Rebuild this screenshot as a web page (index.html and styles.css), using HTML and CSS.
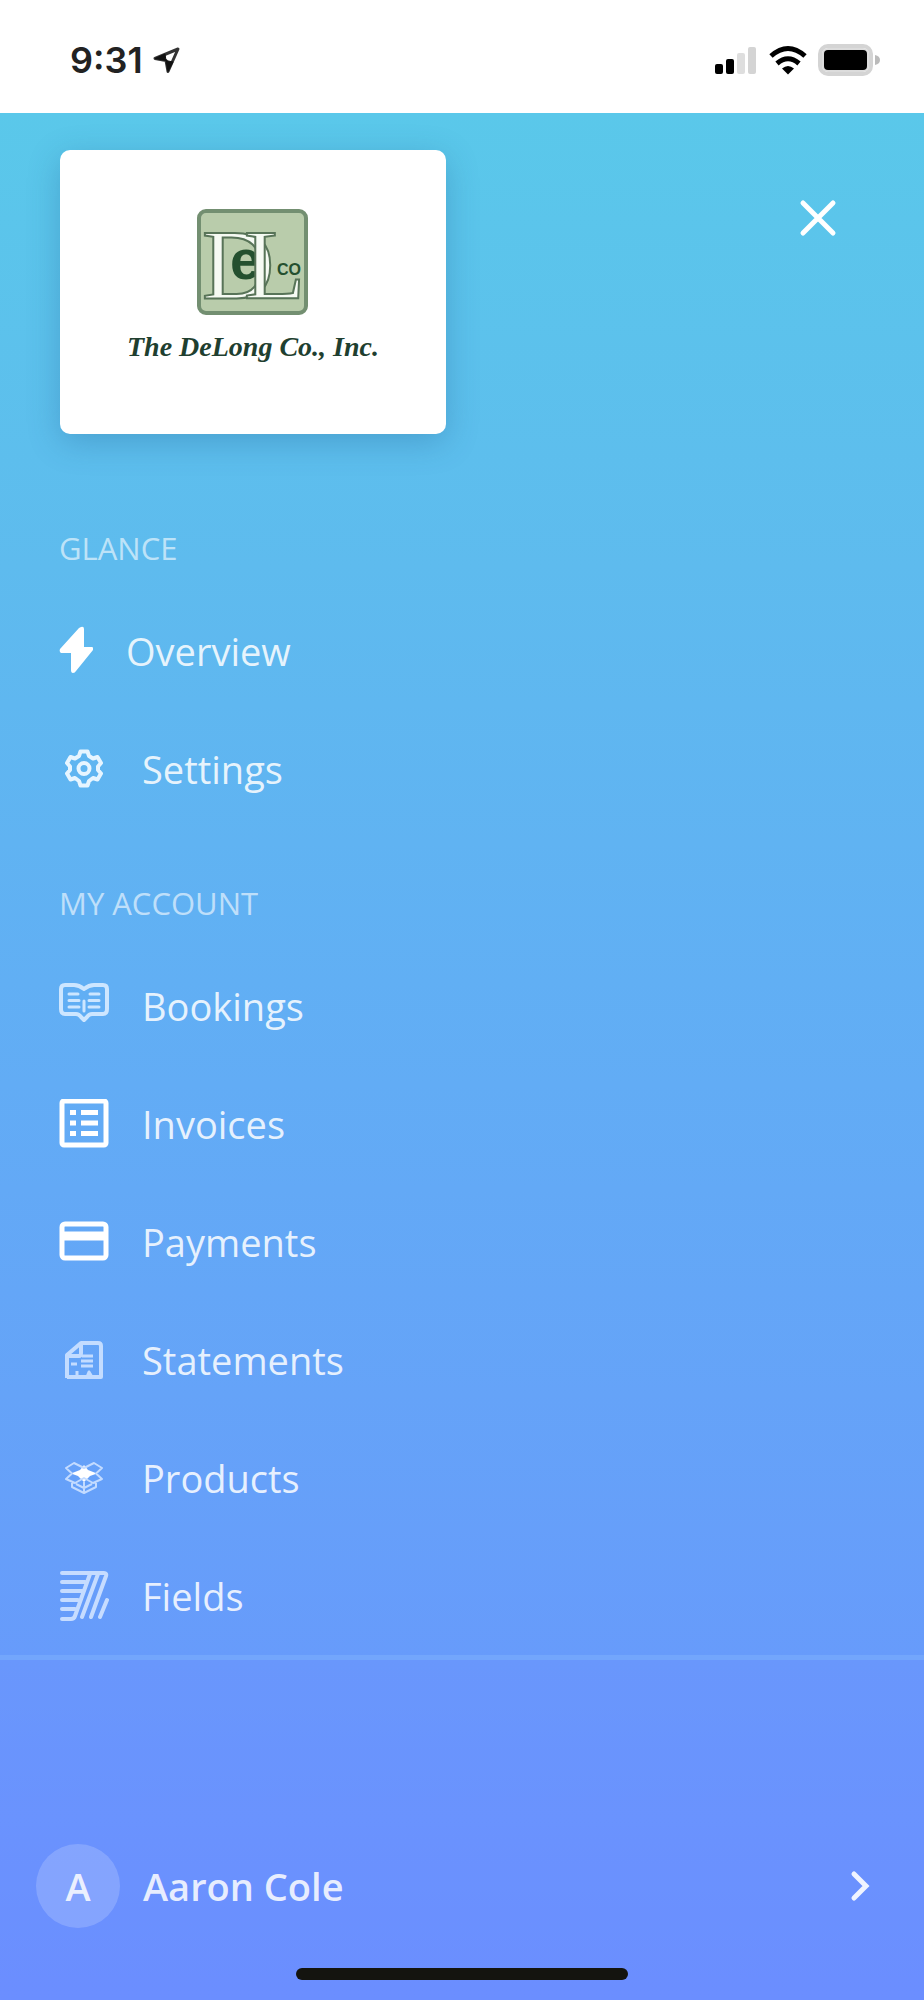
FILE: index.html
```html
<!DOCTYPE html>
<html lang="en">
<head>
<meta charset="utf-8">
<meta name="viewport" content="width=device-width, initial-scale=1">
<title>Menu</title>
<link rel="stylesheet" href="styles.css">
</head>
<body>
<header class="status">
  <div class="status-left">
    <span class="time">9:31</span>
    <svg class="location" viewBox="0 0 28 28" aria-hidden="true"><path d="M25 3 2 12.500 13 14.500 15 25.500Z" fill="none" stroke="#333" stroke-width="3" stroke-linejoin="round"/><path d="M2 12.500 13 14.500 12 8ZM15 25.500 13 14.500 20 16Z" fill="#111" stroke="#111" stroke-width="1"/></svg>
  </div>
  <div class="status-right">
    <svg class="signal" viewBox="0 0 44 30" aria-hidden="true"><rect x="1" y="19" width="8" height="10" rx="2"/><rect x="12" y="14" width="8" height="15" rx="2"/><rect x="23" y="8" width="8" height="21" rx="2" fill="#dedede"/><rect x="34" y="2" width="8" height="27" rx="2" fill="#d4d4d4"/></svg>
    <svg class="wifi" viewBox="0 0 40 30" aria-hidden="true"><path d="M3 11Q20-4 37 11M9 18.500Q20 9 31 18.500" fill="none" stroke="#000" stroke-width="5"/><path d="M14 23.500Q20 18.500 26 23.500L20 29.500Z"/></svg>
    <svg class="battery" viewBox="0 0 62 32" aria-hidden="true"><rect x="2" y="2" width="51" height="28" rx="8" fill="#fff" stroke="#d4d4d4" stroke-width="4"/><rect x="4" y="4" width="47" height="24" rx="6" fill="#dcdcdc"/><rect x="6" y="6" width="43" height="20" rx="4"/><path d="M57 11q5 1 5 5t-5 5z" fill="#bbb"/></svg>
  </div>
</header>

<div class="menu">
  <div class="menu-head">
    <div class="logo-card">
      <svg class="logo" viewBox="0 0 260 170" role="img" aria-label="The DeLong Co., Inc.">
        <rect x="76" y="6" width="107" height="102" rx="7" fill="#b9ccab" stroke="#738f71" stroke-width="4"/>
        <text x="107" y="74" class="logo-e">e</text>
        <text x="79" y="93" class="logo-big">D</text>
        <text x="121" y="93" class="logo-big">L</text>
        <text x="154" y="70" class="logo-co">CO</text>
        <text x="130" y="151" class="logo-name" text-anchor="middle">The DeLong Co., Inc.</text>
      </svg>
    </div>
    <button class="close" type="button" aria-label="Close menu">
      <svg viewBox="0 0 40 40" aria-hidden="true"><path d="M5 5 35 35M35 5 5 35" stroke="#fff" stroke-width="5" stroke-linecap="round"/></svg>
    </button>
  </div>

  <nav class="nav">
    <h2 class="section">GLANCE</h2>
    <a class="item" href="#overview">
      <svg class="icon icon-bolt" viewBox="0 0 34 50" aria-hidden="true"><path d="M22 1Q25 0 25 3V21H33Q35 22 34 24L17 45Q16 47 14 47 12 47 12 44V27H2Q0 26 1 23L20 2Z" fill="#fff"/></svg>
      <span>Overview</span>
    </a>
    <a class="item" href="#settings">
      <svg class="icon" viewBox="0 1 50 50" aria-hidden="true"><g fill="none" stroke="#e7f5ff" stroke-width="4" stroke-linejoin="round"><path d="M21.500 8.500H28.500L30 13 34 15.500 38.500 14 42 20 39 23.500V27L42 30.500 38.500 36.500 34 35 30 38 28.500 42.500H21.500L20 38 16 35 11.500 36.500 8 30.500 11 27V23.500L8 20 11.500 14 16 15.500 20 13Z"/><circle cx="25" cy="25.500" r="5.500"/></g></svg>
      <span>Settings</span>
    </a>

    <h2 class="section section-next">MY ACCOUNT</h2>
    <a class="item" href="#bookings">
      <svg class="icon" viewBox="0 1 50 50" aria-hidden="true"><g fill="none" stroke="#cde6ff" stroke-width="4" stroke-linecap="round" stroke-linejoin="round"><path d="M25 9Q20 5 15 5H6Q2 5 2 9V29Q2 34 6 34H17Q20 34 22 37L25 40 28 37Q30 34 33 34H44Q48 34 48 29V9Q48 5 44 5H35Q30 5 25 9Z"/><path stroke-width="3" d="M25 21V31M10 14H19M10 20.500H20M10 27H20M31 14H40M30 20.500H40M30 27H40"/></g></svg>
      <span>Bookings</span>
    </a>
    <a class="item" href="#invoices">
      <svg class="icon" viewBox="0 1 50 50" aria-hidden="true"><rect x="3" y="3" width="44" height="44" rx="2" fill="none" stroke="#fff" stroke-width="5"/><path d="M11 14.500H17M11 25H17M11 35.500H17M22 14.500H39M22 25H39M22 35.500H39" stroke="#fff" stroke-width="5"/></svg>
      <span>Invoices</span>
    </a>
    <a class="item" href="#payments">
      <svg class="icon" viewBox="0 1 50 50" aria-hidden="true"><rect x="3" y="8" width="44" height="34" rx="3" fill="none" stroke="#fff" stroke-width="5"/><path d="M4 20H46" stroke="#fff" stroke-width="9"/></svg>
      <span>Payments</span>
    </a>
    <a class="item" href="#statements">
      <svg class="icon" viewBox="0 0 50 50" aria-hidden="true"><g fill="none" stroke="#c3dcff" stroke-width="4" stroke-linejoin="round"><path d="M8 43V20L22 8H39Q42 8 42 11V42H8M8 21H20Q22 21 22 18V8"/><path stroke-width="3" d="M23 21H34M22 26H34M22 31H34M12 29H18M18 42V36M28 42 30 37 33 42"/></g></svg>
      <span>Statements</span>
    </a>
    <a class="item" href="#products">
      <svg class="icon" viewBox="0 0 50 50" aria-hidden="true"><path d="M25 12 29 17 38 20.500 31 23 25 29 19 23 12 20.500 21 17Z" fill="#fff"/><path d="M25 15 15 10 7 15 13 20.500 7 26 16 30 25 25 34 30 43 26 37 20.500 43 15 35 10ZM13 30V34L25 40 37 34V30M25 29V39M17 31 25 35 33 31" fill="none" stroke="#c3dbff" stroke-width="2" stroke-linejoin="round"/></svg>
      <span>Products</span>
    </a>
    <a class="item" href="#fields">
      <svg class="icon" viewBox="0 0 50 50" aria-hidden="true"><g fill="none" stroke="#c6dcff" stroke-width="4" stroke-linecap="round" stroke-linejoin="round"><path d="M3 2H45Q48 2 47 5L32 46M3 11H26M3 20H23M3 29H19M3 38H16M3 48H12Q15 48 16 45L31 3M23 46 39 3M41 46 48 29"/></g></svg>
      <span>Fields</span>
    </a>
  </nav>

  <footer class="foot">
    <a class="user" href="#account">
      <span class="avatar">A</span>
      <span class="user-name">Aaron Cole</span>
      <svg class="chevron" viewBox="0 0 20 32" aria-hidden="true"><path d="M4 4 16 16 4 28" fill="none" stroke="#f0f4ff" stroke-width="5" stroke-linecap="round"/></svg>
    </a>
    <div class="home-bar"></div>
  </footer>
</div>
</body>
</html>
```
FILE: styles.css
```css
* { box-sizing: border-box; }
body {
  margin: 0;
  min-height: 100vh;
  display: flex;
  flex-direction: column;
  font-family: "Open Sans", "Noto Sans", sans-serif;
  background: #fff;
}
svg { display: block; flex: none; }

.status {
  height: 113px;
  padding: 6px 44px 0 70px;
  display: flex;
  align-items: center;
  justify-content: space-between;
}
.status-left { display: flex; align-items: center; gap: 10px; }
.status-right { display: flex; align-items: center; gap: 10px; }
.time { font: 600 36px/44px Inter, sans-serif; color: #222; }
.location { width: 28px; height: 28px; }
.signal { width: 44px; height: 30px; }
.wifi { width: 40px; height: 30px; }
.battery { width: 62px; height: 32px; }

.menu {
  flex: 1;
  display: flex;
  flex-direction: column;
  background: linear-gradient(#5ac8ea, #5ebbee 24%, #61aff4 46%, #65a3f8 68%, #679bfb 82%, #698cff);
}
.menu-head {
  padding: 37px 86px 0 60px;
  display: flex;
  justify-content: space-between;
  align-items: flex-start;
}
.logo-card {
  width: 386px;
  height: 284px;
  padding-bottom: 4px;
  border-radius: 10px;
  background: #fff;
  box-shadow: 0 8px 32px rgba(30, 90, 140, 0.3);
  display: flex;
  align-items: center;
  justify-content: center;
}
.logo { width: 260px; height: 170px; }
.logo-big {
  font: 100px "Liberation Serif", serif;
  fill: #f6faf3;
  stroke: #587458;
  stroke-width: 2px;
}
.logo-e { font: bold 56px "Liberation Sans", sans-serif; fill: #24502f; }
.logo-co { font: bold 16px "Liberation Sans", sans-serif; fill: #24502f; }
.logo-name { font: italic bold 28px "Liberation Serif", serif; fill: #1f3f30; }
.close {
  margin: 48px 0 0;
  padding: 0;
  width: 40px;
  height: 40px;
  border: 0;
  background: none;
}

.nav { padding-top: 92px; }
.section {
  margin: 0 0 22px;
  padding-left: 59px;
  font-size: 31px;
  line-height: 44px;
  font-weight: 500;
  color: rgba(255, 255, 255, 0.6);
}
.section-next { margin-top: 53px; }
.item {
  height: 118px;
  padding-left: 59px;
  display: flex;
  align-items: center;
  gap: 33px;
  font-size: 38px;
  line-height: 52px;
  color: rgba(255, 255, 255, 0.85);
  text-decoration: none;
}
.icon { width: 50px; height: 50px; }
.icon-bolt { width: 34px; }

.foot {
  flex: 1;
  padding: 184px 0 20px;
  border-top: 5px solid #73a6fc;
  background: rgba(110, 145, 255, 0.4);
  display: flex;
  flex-direction: column;
  justify-content: space-between;
}
.user {
  padding: 0 54px 0 36px;
  display: flex;
  align-items: center;
  gap: 23px;
  font-size: 38px;
  line-height: 52px;
  font-weight: 600;
  color: rgba(255, 255, 255, 0.85);
  text-decoration: none;
}
.avatar {
  width: 84px;
  height: 84px;
  border-radius: 50%;
  display: flex;
  align-items: center;
  justify-content: center;
  background: rgba(255, 255, 255, 0.18);
}
.user-name { flex: 1; }
.chevron { width: 20px; height: 32px; }
.home-bar {
  width: 36%;
  height: 12px;
  margin: 0 auto;
  border-radius: 6px;
  background: #14140f;
}
```
